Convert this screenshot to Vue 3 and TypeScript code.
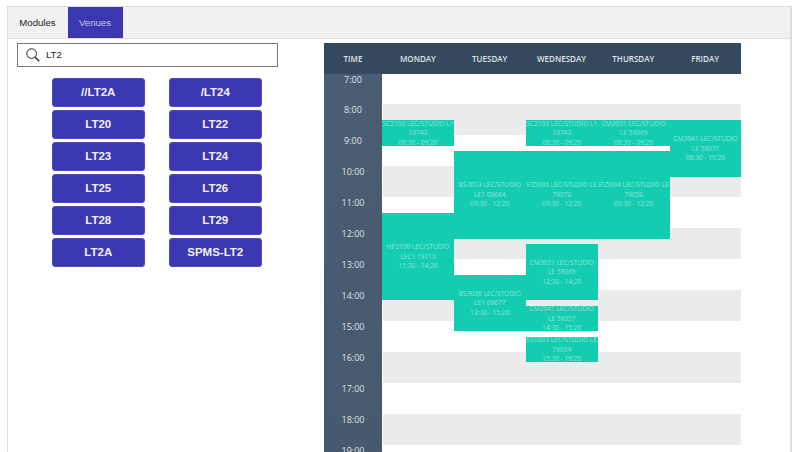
<template>
  <div class="page">
    <div class="frame">
      <div class="tabs">
        <button class="tab">Modules</button>
        <button class="tab active">Venues</button>
      </div>
      <div class="content">
        <div class="left">
          <div class="search">
            <svg class="search-icon" viewBox="0 0 14 14" fill="none" stroke="#222">
              <circle cx="5.6" cy="5.6" r="4.8" stroke-width="1" />
              <path d="M9.2 9.2l4 4" stroke-width="1.3" />
            </svg>
            <span class="search-text">LT2</span>
          </div>
          <div class="venues">
            <button v-for="v in venues" :key="v" class="venue">{{ v }}</button>
          </div>
        </div>
        <div class="timetable">
          <div class="head">
            <div v-for="h in headers" :key="h" class="head-cell">{{ h }}</div>
          </div>
          <div class="body">
            <div class="times">
              <div v-for="t in hours" :key="t" class="time">{{ t }}:00</div>
            </div>
            <div class="days">
              <div v-for="t in hours" :key="t" class="stripe" :class="{ grey: t % 2 === 0 }"></div>
              <div
                v-for="e in events"
                :key="e.name + e.start"
                class="event"
                :style="eventStyle(e)"
              >
                <div class="event-line">{{ e.name }}</div>
                <div class="event-line">{{ e.group }}</div>
                <div class="event-line">{{ e.start }} - {{ e.end }}</div>
              </div>
            </div>
          </div>
        </div>
      </div>
    </div>
  </div>
</template>

<script setup lang="ts">
interface Lesson {
  day: number
  name: string
  group: string
  start: string
  end: string
}

const HOUR_HEIGHT = 30.95
const DAY_WIDTH = 71.9

const venues = ['//LT2A', '/LT24', 'LT20', 'LT22', 'LT23', 'LT24', 'LT25', 'LT26', 'LT28', 'LT29', 'LT2A', 'SPMS-LT2']
const headers = ['TIME', 'MONDAY', 'TUESDAY', 'WEDNESDAY', 'THURSDAY', 'FRIDAY']
const hours = [7, 8, 9, 10, 11, 12, 13, 14, 15, 16, 17, 18, 19]

const events: Lesson[] = [
  { day: 0, name: 'SC2103 LEC/STUDIO L1', group: '10743', start: '08:30', end: '09:20' },
  { day: 0, name: 'HP2100 LEC/STUDIO', group: 'LEC1 19710', start: '11:30', end: '14:20' },
  { day: 1, name: 'BS3013 LEC/STUDIO', group: 'LE1 08664', start: '09:30', end: '12:20' },
  { day: 1, name: 'BS3036 LEC/STUDIO', group: 'LE1 08677', start: '13:30', end: '15:20' },
  { day: 2, name: 'SC2103 LEC/STUDIO L1', group: '10743', start: '08:30', end: '09:20' },
  { day: 2, name: 'ES5006 LEC/STUDIO LE', group: '79070', start: '09:30', end: '12:20' },
  { day: 2, name: 'CM3031 LEC/STUDIO', group: 'LE 58069', start: '12:30', end: '14:20' },
  { day: 2, name: 'CM2041 LEC/STUDIO', group: 'LE 58057', start: '14:30', end: '15:20' },
  { day: 2, name: 'ES1003 LEC/STUDIO LE', group: '79034', start: '15:30', end: '16:20' },
  { day: 3, name: 'CM3031 LEC/STUDIO', group: 'LE 58069', start: '08:30', end: '09:20' },
  { day: 3, name: 'ES5004 LEC/STUDIO LE', group: '79050', start: '09:30', end: '12:20' },
  { day: 4, name: 'CM3041 LEC/STUDIO', group: 'LE 58071', start: '08:30', end: '10:20' },
]

const toHours = (s: string) => {
  const [h, m] = s.split(':').map(Number)
  return h + m / 60 - 7
}

const eventStyle = (e: Lesson) => ({
  left: `${e.day * DAY_WIDTH}px`,
  top: `${toHours(e.start) * HOUR_HEIGHT}px`,
  height: `${(toHours(e.end) - toHours(e.start)) * HOUR_HEIGHT}px`,
})
</script>

<style>
html,
body {
  margin: 0;
  overflow: hidden;
  background: #fff;
}
</style>

<style scoped>
.page {
  height: 452px;
  overflow: hidden;
  padding: 6px 14px 0 7px;
  box-sizing: border-box;
}

.frame {
  border: 1px solid #dcdcdc;
  border-width: 1px 2px 0 1px;
  height: 500px;
}

.tabs {
  display: flex;
  height: 31px;
  background: #f1f1f1;
  border-bottom: 1px solid #dedede;
}

.tab {
  border: none;
  background: none;
  padding: 0 1px 0 0;
  width: 60px;
  font-family: "Liberation Sans", Arial, sans-serif;
  font-size: 9.6px;
  color: #222;
}

.tab.active {
  width: 55px;
  background: #3b37b0;
  color: #c6c8ea;
}

.content {
  display: flex;
  align-items: flex-start;
  padding-top: 4px;
}

.left {
  width: 316px;
  flex-shrink: 0;
}

.search {
  display: flex;
  align-items: center;
  box-sizing: border-box;
  width: 261px;
  height: 23.5px;
  margin-left: 9px;
  padding-left: 8px;
  border: 1px solid #777;
}

.search-icon {
  width: 14px;
  height: 14px;
}

.search-text {
  margin-left: 6px;
  padding-bottom: 1px;
  font-family: "Liberation Sans", Arial, sans-serif;
  font-size: 9.6px;
  color: #222;
}

.venues {
  display: grid;
  grid-template-columns: 92.5px 92.5px;
  column-gap: 24.5px;
  row-gap: 3px;
  margin: 11.5px 0 0 44px;
}

.venue {
  height: 29px;
  padding: 0 0 2px;
  border: 1px solid #4f4cc0;
  border-radius: 3px;
  background: #3b37b0;
  color: #f1f1fa;
  font-family: "Liberation Sans", Arial, sans-serif;
  font-size: 11.5px;
  font-weight: 700;
}

.timetable {
  width: 417px;
  font-family: "Open Sans", sans-serif;
}

.head {
  display: grid;
  grid-template-columns: 58px repeat(5, 71.8px);
  height: 30.5px;
  background: #35495e;
}

.head-cell {
  display: flex;
  align-items: center;
  justify-content: center;
  color: #dfe4e9;
  font-size: 8px;
  font-weight: 600;
}

.body {
  display: flex;
}

.times {
  width: 58px;
  flex-shrink: 0;
  background: linear-gradient(180deg, #4a5d72 0%, #46596e 100%);
}

.time {
  height: 30.95px;
  text-align: center;
  color: #dfe3e7;
  font-size: 9px;
  line-height: 12px;
}

.days {
  position: relative;
  flex: 1;
}

.stripe {
  height: 30.95px;
  margin-left: 1px;
}

.stripe.grey {
  background: #ebebeb;
}

.event {
  position: absolute;
  display: flex;
  flex-direction: column;
  justify-content: center;
  width: 71.9px;
  overflow: hidden;
  background: #14cdb0;
  color: rgba(255, 255, 255, 0.5);
  font-size: 6.6px;
  line-height: 9.5px;
  text-align: center;
}

.event-line {
  white-space: nowrap;
}
</style>
